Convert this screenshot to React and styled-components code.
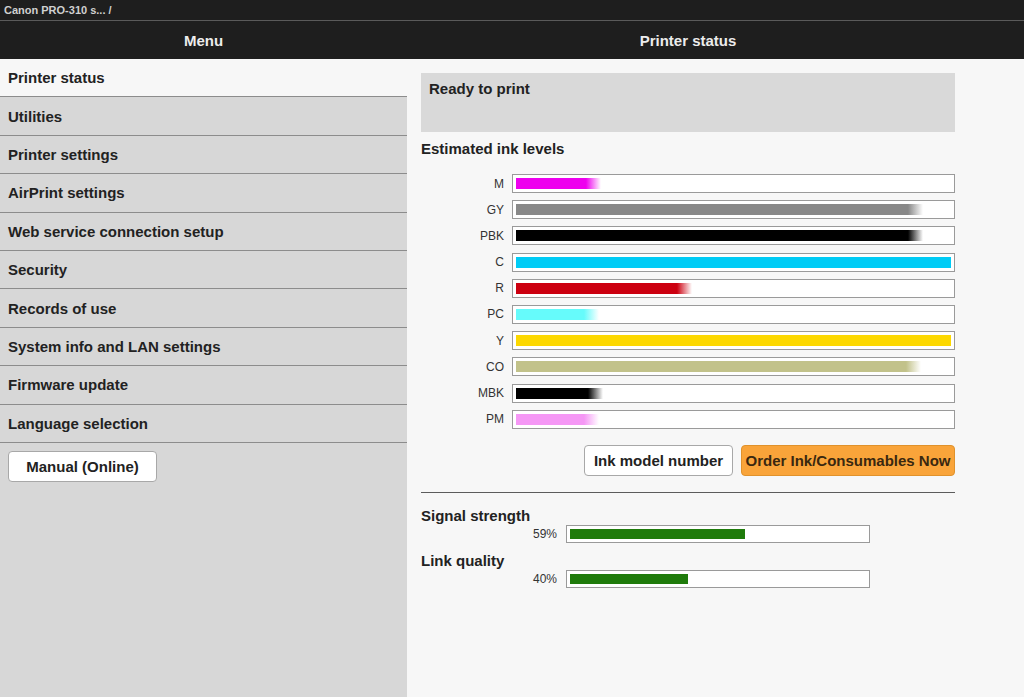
import React from "react"
import styled, { createGlobalStyle } from "styled-components"

const GlobalStyle = createGlobalStyle`
  html, body {
    margin: 0;
    padding: 0;
    background: #f7f7f7;
    font-family: "Liberation Sans", Arial, sans-serif;
    color: #222;
  }
`

const Page = styled.div`
  display: flex;
  flex-direction: column;
  min-height: 697px;
`

const TopBar = styled.div`
  height: 20px;
  display: flex;
  align-items: center;
  padding-left: 4px;
  background: #1e1e1e;
  border-bottom: 1px solid #5a5a5a;
  color: #d0d0d0;
  font-size: 11px;
  font-weight: bold;
`

const Columns = styled.div`
  display: grid;
  grid-template-columns: 407px 562px 1fr;
`

const HeaderBar = styled(Columns)`
  height: 38px;
  background: #1e1e1e;
  color: #ececec;
  font-size: 15px;
  font-weight: bold;
`

const HeaderCell = styled.div`
  display: flex;
  align-items: center;
  justify-content: center;
`

const Main = styled(Columns)`
  flex: 1;
`

const Sidebar = styled.nav`
  background: #d7d7d7;
  display: flex;
  flex-direction: column;
`

const MenuItem = styled.div`
  height: 37.4px;
  display: flex;
  align-items: center;
  padding-left: 8px;
  border-bottom: 1px solid #8c8c8c;
  background: ${p => (p.$active ? "#f7f7f7" : "transparent")};
  font-size: 15px;
  font-weight: bold;
  color: #222;
`

const Button = styled.button`
  height: 31px;
  padding: 0 2px;
  border-radius: 4px;
  border: 1px solid ${p => (p.$primary ? "#e0922c" : "#a8a8a8")};
  background: ${p => (p.$primary ? "#f9a43a" : "#ffffff")};
  color: ${p => (p.$primary ? "#3a2810" : "#222")};
  font-family: inherit;
  font-size: 15px;
  font-weight: bold;
  white-space: nowrap;
  width: ${p => p.$width}px;
`

const ManualWrap = styled.div`
  padding: 8px;
`

const Content = styled.section`
  padding: 14px;
  display: flex;
  flex-direction: column;
`

const StatusBox = styled.div`
  height: 59px;
  box-sizing: border-box;
  padding: 7px 8px;
  background: #d9d9d9;
  font-size: 15px;
  font-weight: bold;
`

const Heading = styled.div`
  font-size: 15px;
  font-weight: bold;
  line-height: 18px;
  margin-top: ${p => p.$top}px;
`

const InkList = styled.div`
  display: flex;
  flex-direction: column;
  gap: 7.2px;
  margin-top: 16px;
`

const MeterRow = styled.div`
  display: grid;
  grid-template-columns: ${p => p.$label}px 1fr;
  column-gap: ${p => p.$gap}px;
  align-items: center;
`

const MeterLabel = styled.span`
  text-align: right;
  font-size: 12px;
  color: #333;
`

const Track = styled.div`
  height: ${p => p.$height}px;
  box-sizing: border-box;
  border: 1px solid #9a9a9a;
  background: #fff;
  padding: 3px;
  display: flex;
`

const Fill = styled.div`
  height: 100%;
  background: ${p =>
    p.$fade
      ? `linear-gradient(to right, ${p.$color} 0, ${p.$color} calc(100% - 15px), rgba(255,255,255,0) 100%)`
      : p.$color};
`

const ButtonRow = styled.div`
  display: flex;
  justify-content: flex-end;
  gap: 8px;
  margin-top: 16px;
`

const Rule = styled.hr`
  border: 0;
  border-top: 1px solid #5c5c5c;
  margin: 16px 0 0;
`

const inks = [
  { name: "M", color: "#ee00ee", level: 19.5 },
  { name: "GY", color: "#888888", level: 93.5 },
  { name: "PBK", color: "#000000", level: 93.5 },
  { name: "C", color: "#00ccf6", level: 100 },
  { name: "R", color: "#cc0010", level: 40.5 },
  { name: "PC", color: "#66fbfb", level: 19 },
  { name: "Y", color: "#fcd800", level: 100 },
  { name: "CO", color: "#c2c28a", level: 93 },
  { name: "MBK", color: "#000000", level: 20 },
  { name: "PM", color: "#f597f5", level: 19 },
]

const menu = [
  "Printer status",
  "Utilities",
  "Printer settings",
  "AirPrint settings",
  "Web service connection setup",
  "Security",
  "Records of use",
  "System info and LAN settings",
  "Firmware update",
  "Language selection",
]

const App = () => (
  <Page>
    <GlobalStyle />
    <TopBar>Canon PRO-310 s... /</TopBar>
    <HeaderBar>
      <HeaderCell>Menu</HeaderCell>
      <HeaderCell>Printer status</HeaderCell>
    </HeaderBar>
    <Main>
      <Sidebar>
        {menu.map((item, i) => (
          <MenuItem key={item} $active={i === 0}>
            {item}
          </MenuItem>
        ))}
        <ManualWrap>
          <Button $width={149}>Manual (Online)</Button>
        </ManualWrap>
      </Sidebar>
      <Content>
        <StatusBox>Ready to print</StatusBox>
        <Heading $top={8}>Estimated ink levels</Heading>
        <InkList>
          {inks.map(ink => (
            <MeterRow key={ink.name} $label={83} $gap={8}>
              <MeterLabel>{ink.name}</MeterLabel>
              <Track $height={19}>
                <Fill
                  $color={ink.color}
                  $fade={ink.level < 100}
                  style={{ width: `${ink.level}%` }}
                />
              </Track>
            </MeterRow>
          ))}
        </InkList>
        <ButtonRow>
          <Button $width={149}>Ink model number</Button>
          <Button $primary $width={214}>Order Ink/Consumables Now</Button>
        </ButtonRow>
        <Rule />
        <Heading $top={14}>Signal strength</Heading>
        <MeterRow $label={136} $gap={9} style={{ width: 449 }}>
          <MeterLabel>59%</MeterLabel>
          <Track $height={18}>
            <Fill $color="#1f7b0b" style={{ width: "59%" }} />
          </Track>
        </MeterRow>
        <Heading $top={9}>Link quality</Heading>
        <MeterRow $label={136} $gap={9} style={{ width: 449 }}>
          <MeterLabel>40%</MeterLabel>
          <Track $height={18}>
            <Fill $color="#1f7b0b" style={{ width: "40%" }} />
          </Track>
        </MeterRow>
      </Content>
      <div />
    </Main>
  </Page>
)

export default App
